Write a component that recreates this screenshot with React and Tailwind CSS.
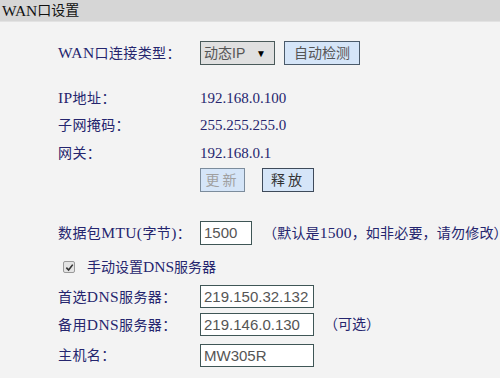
import React from "react";

const serif = { fontFamily: '"Liberation Serif", "Noto Sans CJK SC", serif' };
const sans = { fontFamily: '"Liberation Sans", "Noto Sans CJK SC", sans-serif' };

// latin runs in the original render wider than the CJK glyphs, so bump them up
function Mixed({ text }) {
  const parts = text.split(/([A-Za-z0-9().]+)/);
  return (
    <>
      {parts.map((p, i) =>
        /^[A-Za-z0-9().]+$/.test(p) ? (
          <span key={i} className="text-[15.5px]">
            {p}
          </span>
        ) : (
          <span key={i}>{p}</span>
        )
      )}
    </>
  );
}

function Label({ children }) {
  return (
    <div className="w-[142px] shrink-0 text-[14px] text-[#25256e] tracking-[0.4px]" style={serif}>
      <Mixed text={children} />
    </div>
  );
}

function Value({ children }) {
  return (
    <span className="text-[15px] text-[#25256e]" style={serif}>
      {children}
    </span>
  );
}

function Field({ value }) {
  return (
    <div
      className="w-[114px] h-[23px] shrink-0 border border-[#3f5656] bg-white px-[3px] flex items-center text-[15px] text-[#555] leading-none"
      style={sans}
    >
      {value}
    </div>
  );
}

export default function App() {
  return (
    <div className="w-[500px] h-[378px] overflow-hidden bg-[#f3f3f3] whitespace-nowrap">
      {/* header */}
      <div
        className="h-[22px] bg-[#d6d6d6] border-b border-[#e2e2e2] pl-[2px] flex items-center text-[14px] text-[#111]"
        style={serif}
      >
        <Mixed text="WAN口设置" />
      </div>

      <div className="pl-[58px] flex flex-col">
        {/* connection type */}
        <div className="mt-[19px] h-[24px] flex items-center">
          <Label>WAN口连接类型：</Label>
          <div
            className="w-[75px] h-[24px] shrink-0 border border-[#4a5a5a] bg-[#e0e0e0] flex items-center justify-between pl-[3px] pr-[8px] text-[14px] text-[#555]"
            style={sans}
          >
            <span>动态IP</span>
            <span className="text-[10px] text-black">▼</span>
          </div>
          <div
            className="ml-[9px] w-[76px] h-[24px] shrink-0 border border-[#4a5a6a] bg-[#d5e5f8] flex items-center justify-center text-[14px] text-[#555]"
            style={sans}
          >
            自动检测
          </div>
        </div>

        {/* status */}
        <div className="mt-[23px] h-[20px] flex items-center">
          <Label>IP地址：</Label>
          <Value>192.168.0.100</Value>
        </div>
        <div className="mt-[7px] h-[20px] flex items-center">
          <Label>子网掩码：</Label>
          <Value>255.255.255.0</Value>
        </div>
        <div className="mt-[8px] h-[20px] flex items-center">
          <Label>网关：</Label>
          <Value>192.168.0.1</Value>
        </div>

        <div className="mt-[5px] h-[24px] flex items-center">
          <div className="w-[142px] shrink-0" />
          <div
            className="w-[45px] h-[24px] shrink-0 border border-[#7c8c9c] bg-[#d5e5f8] flex items-center justify-center text-[14px] text-[#a0a0a0] tracking-[3px]"
            style={sans}
          >
            更新
          </div>
          <div
            className="ml-[17px] w-[52px] h-[24px] shrink-0 border border-[#3e4a5a] bg-[#d5e5f8] flex items-center justify-center text-[14px] text-[#333] tracking-[3px]"
            style={sans}
          >
            释放
          </div>
        </div>

        {/* MTU */}
        <div className="mt-[29px] h-[24px] flex items-center">
          <Label>数据包MTU(字节)：</Label>
          <div
            className="w-[52px] h-[24px] shrink-0 border border-[#3f5656] bg-white px-[3px] flex items-center text-[15px] text-[#555]"
            style={sans}
          >
            1500
          </div>
          <span className="ml-[11px] shrink-0 text-[14px] text-[#25256e] tracking-[0.2px]" style={serif}>
            <Mixed text="（默认是1500，如非必要，请勿修改）" />
          </span>
        </div>

        {/* DNS checkbox */}
        <div className="mt-[14px] h-[16px] flex items-center">
          <div className="ml-[5px] w-[12px] h-[12px] rounded-[2px] border border-[#9a9a9a] bg-[#e4e4e4] flex items-center justify-center">
            <svg width="9" height="9" viewBox="0 0 10 10">
              <path d="M1.5 5.2 L4 7.8 L8.6 1.8" fill="none" stroke="#333" strokeWidth="1.8" />
            </svg>
          </div>
          <span className="ml-[12px] text-[14px] text-[#25256e]" style={serif}>
            <Mixed text="手动设置DNS服务器" />
          </span>
        </div>

        <div className="mt-[10px] h-[23px] flex items-center">
          <Label>首选DNS服务器：</Label>
          <Field value="219.150.32.132" />
        </div>
        <div className="mt-[5px] h-[23px] flex items-center">
          <Label>备用DNS服务器：</Label>
          <Field value="219.146.0.130" />
          <span className="ml-[10px] text-[14px] text-[#25256e]" style={serif}>（可选）</span>
        </div>
        <div className="mt-[8px] h-[23px] flex items-center">
          <Label>主机名：</Label>
          <Field value="MW305R" />
        </div>
      </div>
    </div>
  );
}
